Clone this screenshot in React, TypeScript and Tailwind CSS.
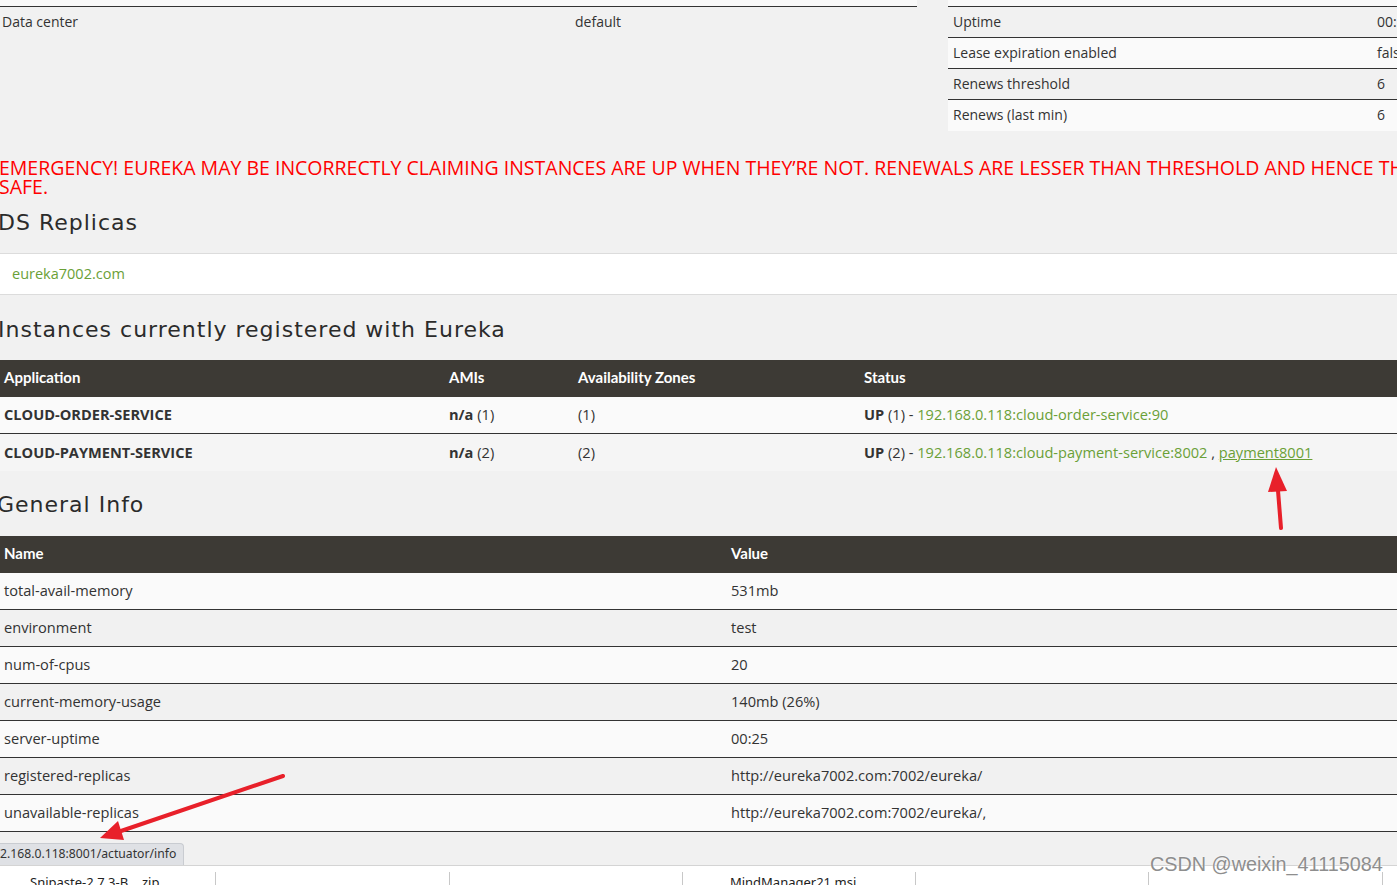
import React from 'react'

const sans = "font-['Open_Sans',sans-serif]"
const heading = "h-[24px] text-[22px] leading-[24px] tracking-[1px] text-[#2b2b2b] font-['DejaVu_Sans',sans-serif] whitespace-nowrap"
const link = 'text-[#6aa037]'

const generalInfo = [
  ['total-avail-memory', '531mb'],
  ['environment', 'test'],
  ['num-of-cpus', '20'],
  ['current-memory-usage', '140mb (26%)'],
  ['server-uptime', '00:25'],
  ['registered-replicas', 'http://eureka7002.com:7002/eureka/'],
  ['unavailable-replicas', 'http://eureka7002.com:7002/eureka/,'],
]

const statusRows = [
  ['Uptime', '00:25'],
  ['Lease expiration enabled', 'false'],
  ['Renews threshold', '6'],
  ['Renews (last min)', '6'],
]

function Arrows() {
  return (
    <svg className="absolute inset-0 pointer-events-none" width="1397" height="885">
      <line x1="1281" y1="528" x2="1277.8" y2="488" stroke="#e8202a" strokeWidth="4" strokeLinecap="round" />
      <polygon points="1276,467 1287,491 1268,492" fill="#e8202a" />
      <line x1="283" y1="776" x2="121" y2="831" stroke="#e8202a" strokeWidth="4" strokeLinecap="round" />
      <polygon points="100,838 118,821 124,840" fill="#e8202a" />
    </svg>
  )
}

function DownloadBar() {
  const items = ['Snipaste-2.7.3-B....zip', '', '', 'MindManager21.msi', '', '']
  return (
    <div className="h-[20px] bg-white border-t border-[#d4d4d4] overflow-hidden">
      <div className="flex h-full ml-[-17px]">
        {items.map((name, i) => (
          <div key={i} className="w-[233.3px] shrink-0 h-full flex">
            <div className="flex-1 pl-[47px] pt-[8px] text-[13px] leading-[16px] text-[#222] font-['Noto_Sans',sans-serif] whitespace-nowrap">
              {name}
            </div>
            <div className="w-px mt-[6px] bg-[#c8c8c8]" />
          </div>
        ))}
      </div>
    </div>
  )
}

export default function App() {
  return (
    <div className={`relative w-[1397px] h-[885px] overflow-hidden bg-[#f1f1f1] text-[#333] text-[14px] ${sans}`}>
      {/* top tables */}
      <div className="flex h-[130px]">
        <div className="w-[917px] shrink-0">
          <div className="h-[7px] bg-[#f9f9f9] border-b border-[#333]" />
          <div className="flex h-[30px] items-center pb-[2px]">
            <div className="w-[573px] pl-[2px]">Data center</div>
            <div className="pl-[2px]">default</div>
          </div>
        </div>
        <div className="ml-[31px] w-[480px] shrink-0">
          <div className="h-[7px] bg-[#f9f9f9] border-b border-[#333]" />
          {statusRows.map(([k, v], i) => (
            <div
              key={k}
              className={`flex h-[31px] items-center pb-[2px] ${i % 2 === 0 ? 'bg-[#f1f1f1]' : 'bg-[#fafafa]'} ${i < statusRows.length - 1 ? 'border-b border-[#333]' : ''}`}
            >
              <div className="w-[424px] pl-[5px]">{k}</div>
              <div className="pl-[5px]">{v}</div>
            </div>
          ))}
        </div>
      </div>

      {/* emergency */}
      <div className="mt-[28px] ml-[-1px] h-[38px] text-[19.5px] leading-[19px] text-[#ff0000] uppercase whitespace-nowrap">
        EMERGENCY! EUREKA MAY BE INCORRECTLY CLAIMING INSTANCES ARE UP WHEN THEY’RE NOT. RENEWALS ARE LESSER THAN THRESHOLD AND HENCE THE INSTANCES ARE NOT BEING EXPIRED JUST TO BE
        <br />
        SAFE.
      </div>

      <h2 className={`mt-[15px] ml-[-2px] ${heading}`}>DS Replicas</h2>
      <div className="mt-[18px] h-[42px] bg-white border-y border-[#dcdcdc] flex items-center pl-[12px] text-[14.5px]">
        <span className={link}>eureka7002.com</span>
      </div>

      <h2 className={`mt-[23px] ml-[-2px] ${heading}`}>Instances currently registered with Eureka</h2>
      <div className="mt-[18px] text-[14.6px]">
        <div className="flex h-[37px] items-center pb-[3px] bg-[#3d3a35] text-white text-[15px] font-bold font-['Lato',sans-serif]">
          <div className="w-[445px] pl-[4px]">Application</div>
          <div className="w-[129px] pl-[4px]">AMIs</div>
          <div className="w-[286px] pl-[4px]">Availability Zones</div>
          <div className="pl-[4px]">Status</div>
        </div>
        <div className="flex h-[37px] items-center bg-[#fafafa] border-b border-[#333]">
          <div className="w-[445px] pl-[4px] font-bold">CLOUD-ORDER-SERVICE</div>
          <div className="w-[129px] pl-[4px]"><b className="font-bold">n/a</b> (1)</div>
          <div className="w-[286px] pl-[4px]">(1)</div>
          <div className="pl-[4px] whitespace-nowrap">
            <b className="font-bold">UP</b> (1) - <span className={link}>192.168.0.118:cloud-order-service:90</span>
          </div>
        </div>
        <div className="flex h-[37px] items-center bg-[#f5f5f5]">
          <div className="w-[445px] pl-[4px] font-bold">CLOUD-PAYMENT-SERVICE</div>
          <div className="w-[129px] pl-[4px]"><b className="font-bold">n/a</b> (2)</div>
          <div className="w-[286px] pl-[4px]">(2)</div>
          <div className="pl-[4px] whitespace-nowrap">
            <b className="font-bold">UP</b> (2) - <span className={link}>192.168.0.118:cloud-payment-service:8002</span> ,{' '}
            <span className={`${link} underline`}>payment8001</span>
          </div>
        </div>
      </div>

      <h2 className={`mt-[22px] ml-[-3px] ${heading}`}>General Info</h2>
      <div className="mt-[19px] text-[14.6px]">
        <div className="flex h-[37px] items-center pb-[3px] bg-[#3d3a35] text-white text-[15px] font-bold font-['Lato',sans-serif]">
          <div className="w-[727px] pl-[4px]">Name</div>
          <div className="pl-[4px]">Value</div>
        </div>
        {generalInfo.map(([k, v], i) => (
          <div
            key={k}
            className={`flex h-[37px] items-center border-b border-[#333] ${i % 2 === 0 ? 'bg-[#fafafa]' : 'bg-[#f1f1f1]'}`}
          >
            <div className="w-[727px] pl-[4px]">{k}</div>
            <div className="pl-[4px]">{v}</div>
          </div>
        ))}
      </div>

      {/* browser status bubble + downloads bar */}
      <div className="mt-[11px] h-[22px] w-[184px] bg-[#dfe1e5] border-t border-r border-[#c9ccd1] rounded-tr-[4px] flex items-center text-[12.2px] text-[#333] font-['Noto_Sans',sans-serif] whitespace-nowrap">
        2.168.0.118:8001/actuator/info
      </div>
      <DownloadBar />

      <div className="absolute left-[1150px] top-[852px] text-[19.8px] leading-[24px] text-[#8e8e8e] font-['Liberation_Sans',sans-serif] [text-shadow:0_0_2px_#fff]">
        CSDN @weixin_41115084
      </div>

      <Arrows />
    </div>
  )
}
